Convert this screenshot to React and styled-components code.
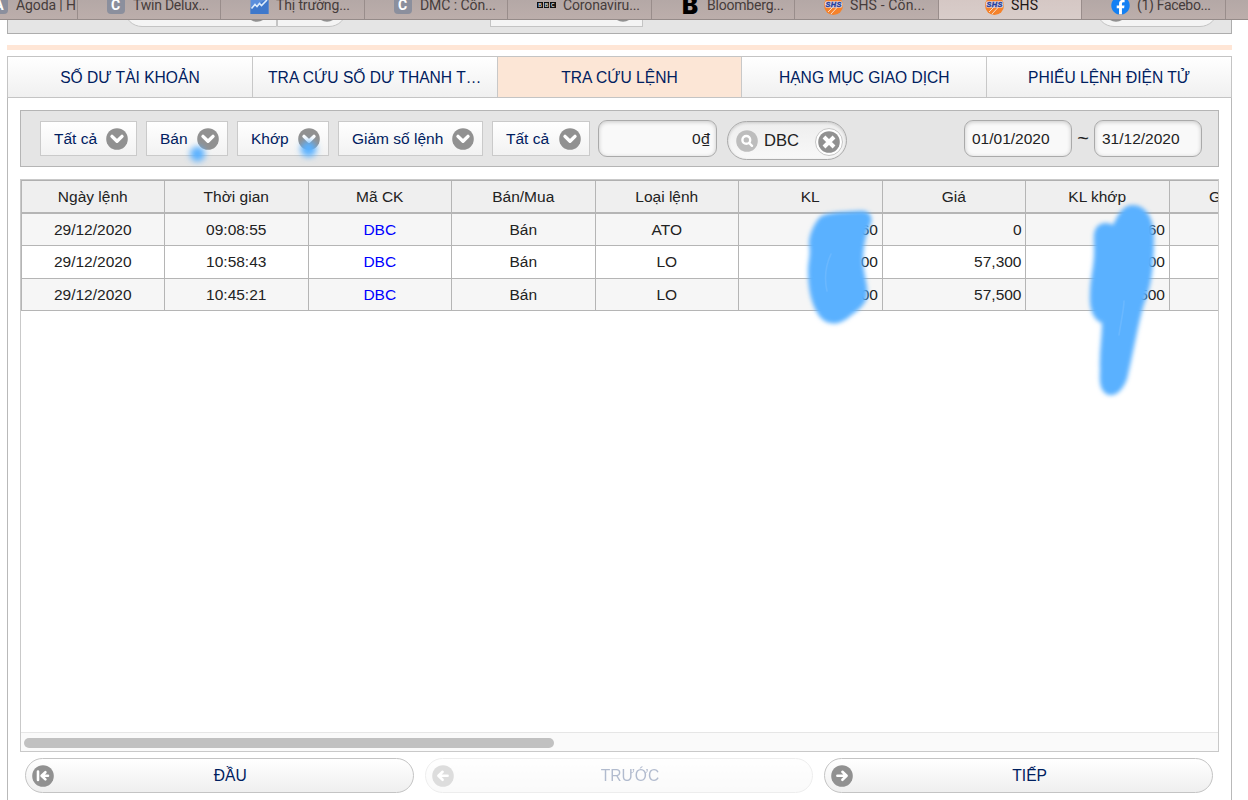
import React from "react";
import styled, { createGlobalStyle, css } from "styled-components";
import { FaFacebook } from "react-icons/fa";

const browserTabs = [
  { title: "Agoda | H", icon: "A", start: 56 },
  { title: "Twin Delux...", icon: "C", width: 76 },
  { title: "Thị trường...", icon: "chart", width: 74 },
  { title: "DMC : Côn...", icon: "C", width: 76 },
  { title: "Coronaviru...", icon: "bbc", width: 77 },
  { title: "Bloomberg...", icon: "B", width: 77 },
  { title: "SHS - Côn...", icon: "shs", width: 75 },
  { title: "SHS", icon: "shs", width: 27, start: 46, active: true },
  { title: "(1) Facebo...", icon: "facebook", width: 74 },
];

const sections = [
  { label: "SỐ DƯ TÀI KHOẢN" },
  { label: "TRA CỨU SỐ DƯ THANH T…" },
  { label: "TRA CỨU LỆNH", active: true },
  { label: "HẠNG MỤC GIAO DỊCH" },
  { label: "PHIẾU LỆNH ĐIỆN TỬ" },
];

const filters = [
  { label: "Tất cả", width: 97 },
  { label: "Bán", width: 82 },
  { label: "Khớp", width: 92 },
  { label: "Giảm số lệnh", width: 145 },
  { label: "Tất cả", width: 98 },
];

const columns = [
  "Ngày lệnh",
  "Thời gian",
  "Mã CK",
  "Bán/Mua",
  "Loại lệnh",
  "KL",
  "Giá",
  "KL khớp",
  "Giá khớp",
];

const orders = [
  ["29/12/2020", "09:08:55", "DBC", "Bán", "ATO", "60", "0", "60", ""],
  ["29/12/2020", "10:58:43", "DBC", "Bán", "LO", "00", "57,300", "00", ""],
  ["29/12/2020", "10:45:21", "DBC", "Bán", "LO", "00", "57,500", "500", ""],
];

const iconPaths = {
  down: "M6 8.4 11 13.3 16 8.4",
  close: "M6 6 16 16M16 6 6 16",
  first: "M6 6.6V15M16 10.8H10.5M13.4 7.2 9.6 10.8 13.4 14.4",
  prev: "M15.6 10.8H7M10.6 6.8 6.4 10.8 10.6 14.8",
  next: "M6.4 10.8H15M11.4 6.8 15.6 10.8 11.4 14.8",
};

function DiscIcon({ name, color = "#919191", stroke = 2.6 }) {
  return (
    <Disc viewBox="0 0 22 22">
      <circle cx="11" cy="11" r="10.8" fill={color} />
      {name === "search" ? (
        <g fill="none" stroke="#fff" strokeWidth="2.4" strokeLinecap="round">
          <circle cx="10.3" cy="9.9" r="3.9" />
          <path d="M13.2 13 16 15.8" />
        </g>
      ) : (
        <path
          d={iconPaths[name]}
          fill="none"
          stroke="#fff"
          strokeWidth={stroke}
          strokeLinecap={name === "close" ? "butt" : "round"}
          strokeLinejoin="round"
        />
      )}
    </Disc>
  );
}

function Favicon({ name }) {
  if (name === "chart") {
    return (
      <svg width="19" height="18" viewBox="0 0 19 18">
        <rect x="0.5" width="18" height="18" fill="#5b8fdc" />
        <path d="M0.5 12 5 8 8 9 13 5 18.5 4V18H0.5Z" fill="#3f78cb" />
        <path
          d="M1.5 12.5 5 8.5 7 10.5 9.5 7.5 11.5 9.5 17 4"
          fill="none"
          stroke="#dcebfb"
          strokeWidth="1.6"
        />
      </svg>
    );
  }
  if (name === "bbc") {
    return (
      <BbcMark>
        <span>B</span>
        <span>B</span>
        <span>C</span>
      </BbcMark>
    );
  }
  if (name === "B") {
    return <HeavyMark>B</HeavyMark>;
  }
  if (name === "shs") {
    return (
      <svg width="19" height="19" viewBox="0 0 19 19">
        <circle cx="9.5" cy="9.5" r="9.5" fill="#f5822b" />
        <path
          d="M4 16 9 11M7 18 13 11.5"
          stroke="#f7dccb"
          strokeWidth="1"
        />
        <rect x="0.8" y="5.2" width="17.6" height="6.6" rx="2" fill="#e3d5dc" />
        <text
          x="9.5"
          y="11"
          textAnchor="middle"
          fontFamily="Liberation Sans, sans-serif"
          fontSize="7.4"
          fontWeight="700"
          fontStyle="italic"
          fill="#263f9e"
          stroke="#263f9e"
          strokeWidth="0.4"
          textLength="16"
        >
          SHS
        </text>
      </svg>
    );
  }
  if (name === "facebook") {
    return (
      <FacebookMark>
        <FaFacebook size={19} />
      </FacebookMark>
    );
  }
  return <LetterMark>{name}</LetterMark>;
}

function BrowserBar() {
  return (
    <TabStrip>
      {browserTabs.map((tab, i) => (
        <BrowserTab key={i} $active={tab.active} $start={tab.start}>
          <Favicon name={tab.icon} />
          <TabTitle viewBox={`0 0 ${tab.width || 66} 20`} $width={tab.width || 66}>
            <text x="0" y="14.7" textLength={tab.width || 60} lengthAdjust="spacing">
              {tab.title}
            </text>
          </TabTitle>
        </BrowserTab>
      ))}
    </TabStrip>
  );
}

// hand-drawn marks that cover the order volumes
function Redaction() {
  return (
    <Marks viewBox="0 0 1248 800">
      <defs>
        <filter id="soft" x="-20%" y="-20%" width="140%" height="140%">
          <feGaussianBlur stdDeviation="2" />
        </filter>
        <filter id="softer" x="-100%" y="-100%" width="300%" height="300%">
          <feGaussianBlur stdDeviation="3.2" />
        </filter>
      </defs>
      <g fill="#5ab1ff" filter="url(#softer)">
        <circle cx="197.5" cy="154" r="7.5" />
        <circle cx="308.5" cy="149" r="8" />
      </g>
      <g fill="#5ab1ff" filter="url(#soft)">
        <path d="M820 217C828 212 842 212 858 211C868 210 873 215 871 223C866 233 863 247 863 262C864 276 869 288 867 298C863 308 855 312 848 318C839 325 828 326 820 317C811 305 808 289 808 270C808 262 811 254 809 244C809 234 814 224 820 217Z" />
        <path d="M1096 228C1100 222 1108 222 1113 225C1117 218 1121 206 1132 205C1146 205 1154 218 1154 238C1154 262 1152 286 1144 304C1138 324 1134 350 1127 379C1122 392 1115 396 1109 395C1101 393 1099 384 1100 371C1099 353 1102 338 1102 323C1093 320 1089 308 1090 294C1090 278 1095 263 1094 247C1094 240 1093 233 1096 228Z" />
      </g>
      <g fill="none" stroke="#6ab8ff" strokeWidth="1.6" strokeLinecap="round">
        <path d="M831 254C825 267 824 278 827 291" />
        <path d="M1124 301C1124 309 1121 321 1119 335" />
      </g>
    </Marks>
  );
}

export default function App() {
  return (
    <>
      <GlobalStyle />
      <Screen>
        <BrowserBar />
        <Content>
          <PreviousBar>
            <PeekPill $width={153} $left>
              <DiscIcon name="down" />
            </PeekPill>
            <PeekPill $width={70} $right>
              <DiscIcon name="down" />
            </PeekPill>
            <PeekPill $width={153} $offset={143}>
              <DiscIcon name="down" />
            </PeekPill>
            <PeekPill $width={122} $offset={453} $left $right $lead>
              <DiscIcon name="down" />
            </PeekPill>
          </PreviousBar>
          <Divider />
          <SectionTabs>
            {sections.map((section) => (
              <SectionTab key={section.label} $active={section.active}>
                {section.label}
              </SectionTab>
            ))}
          </SectionTabs>
          <Panel>
            <FilterBar>
              {filters.map((filter, i) => (
                <Select key={i} $width={filter.width}>
                  {filter.label}
                  <DiscIcon name="down" stroke={3.4} />
                </Select>
              ))}
              <PriceField>
                0<Currency>₫</Currency>
              </PriceField>
              <SearchField>
                <DiscIcon name="search" color="#bdbdbd" />
                <span>DBC</span>
                <ClearButton>
                  <DiscIcon name="close" stroke={4} />
                </ClearButton>
              </SearchField>
              <Dates>
                <DateField>01/01/2020</DateField>
                <Tilde>~</Tilde>
                <DateField>31/12/2020</DateField>
              </Dates>
            </FilterBar>
            <TableBox>
              <HeaderRow>
                {columns.map((column) => (
                  <HeaderCell key={column}>{column}</HeaderCell>
                ))}
              </HeaderRow>
              {orders.map((order, i) => (
                <Row key={i} $striped={i % 2 === 0}>
                  {order.map((value, col) => (
                    <Cell key={col} $numeric={col > 4} $symbol={col === 2}>
                      {value}
                    </Cell>
                  ))}
                </Row>
              ))}
              <ScrollTrack>
                <ScrollThumb />
              </ScrollTrack>
            </TableBox>
            <Pager>
              <PagerButton>
                <DiscIcon name="first" />
                <span>ĐẦU</span>
              </PagerButton>
              <PagerButton $disabled>
                <DiscIcon name="prev" />
                <span>TRƯỚC</span>
              </PagerButton>
              <PagerButton>
                <DiscIcon name="next" />
                <span>TIẾP</span>
              </PagerButton>
            </Pager>
          </Panel>
        </Content>
        <Redaction />
      </Screen>
    </>
  );
}

const GlobalStyle = createGlobalStyle`
  * {
    box-sizing: border-box;
  }
  body {
    margin: 0;
    background: #fff;
  }
`;

const Screen = styled.div`
  position: relative;
  width: 1248px;
  height: 800px;
  overflow: hidden;
  background: #fff;
  color: #222;
  font-family: "Liberation Sans", Arial, sans-serif;
  font-size: 15.5px;
`;

const TabStrip = styled.div`
  display: flex;
  height: 20px;
  overflow: hidden;
  background: linear-gradient(#b4a8a6, #bcaeab);
  border-bottom: 1px solid #958b89;
  margin-left: -66px;
  width: 1314px;
`;

const BrowserTab = styled.div`
  display: flex;
  align-items: center;
  gap: 7px;
  flex: 0 0 143.5px;
  height: 30px;
  margin-top: -10px;
  padding-left: ${(props) => props.$start || 29}px;
  overflow: hidden;
  color: ${(props) => (props.$active ? "#1d1615" : "#463c3b")};
  background: ${(props) =>
    props.$active ? "linear-gradient(#d3c5c2, #d9cdca)" : "transparent"};
  border-right: 1px solid #998d8b;

  > * {
    flex-shrink: 0;
  }
`;

const TabTitle = styled.svg`
  width: ${(props) => props.$width}px;
  height: 20px;
  fill: currentColor;
  overflow: visible;
  font-family: Roboto, sans-serif;
  font-size: 14px;
`;

const mark = css`
  display: flex;
  align-items: center;
  justify-content: center;
  width: 19px;
  height: 19px;
`;

const LetterMark = styled.div`
  ${mark};
  width: 18px;
  height: 18px;
  margin-right: 1px;
  border-radius: 4px;
  background: #8b8f9d;
  color: #fff;
  font-family: Roboto, sans-serif;
  font-size: 14px;
  font-weight: 700;
`;

const HeavyMark = styled.div`
  ${mark};
  color: #000;
  font-family: Inter, sans-serif;
  font-size: 24px;
  font-weight: 900;
`;

const FacebookMark = styled.div`
  ${mark};
  border-radius: 50%;
  background: radial-gradient(#fff 60%, transparent 61%);
  color: #1480f3;
`;

const BbcMark = styled.div`
  ${mark};
  gap: 1px;

  span {
    width: 5.4px;
    height: 6px;
    background: #111;
    color: #ddd;
    font-size: 5px;
    line-height: 6px;
    font-weight: 700;
    text-align: center;
  }
`;

const Disc = styled.svg`
  display: block;
  flex: none;
  width: 22px;
  height: 22px;
`;

const Content = styled.div`
  display: flex;
  flex-direction: column;
  width: 1225px;
  height: 780px;
  margin-left: 7px;

  > * {
    flex-shrink: 0;
  }
`;

const PreviousBar = styled.div`
  display: flex;
  align-items: flex-start;
  height: 14px;
  padding-left: 116px;
  overflow: hidden;
  background: #e5e5e5;
  border: 1px solid #adadad;
  border-top: 0;
`;

const PeekPill = styled.div`
  display: flex;
  align-items: center;
  justify-content: ${(props) => (props.$lead ? "flex-start" : "flex-end")};
  flex: none;
  width: ${(props) => props.$width}px;
  height: 36px;
  margin-top: -29px;
  margin-left: ${(props) => props.$offset || 0}px;
  padding: 4px 8px 0;
  background: #f4f4f4;
  border: 1px solid #c4c4c4;
  border-radius: ${({ $left, $right }) =>
    `${$left ? 18 : 0}px ${$right ? 18 : 0}px ${$right ? 18 : 0}px ${$left ? 18 : 0}px`};
`;

const Divider = styled.div`
  height: 5px;
  margin: 11px 0 6px;
  background: #ffe6d6;
`;

const SectionTabs = styled.div`
  display: flex;
  height: 42px;
  border: 1px solid #c4c4c4;
`;

const SectionTab = styled.div`
  flex: 1;
  line-height: 41px;
  text-align: center;
  font-size: 15.6px;
  color: #00205f;
  white-space: nowrap;
  background: ${(props) =>
    props.$active ? "#fce6d6" : "linear-gradient(#fff, #f0f0f0)"};

  & + & {
    border-left: 1px solid #c8c8c8;
  }
`;

const Panel = styled.div`
  flex: 1;
  padding: 12px;
  border: 1px solid #b9b9b9;
  border-top: 0;
  border-bottom: 0;
`;

const FilterBar = styled.div`
  display: flex;
  align-items: center;
  gap: 9px;
  height: 57px;
  padding: 0 16px 0 19px;
  background: #e5e5e5;
  border: 1px solid #b5b5b5;
`;

const Select = styled.div`
  display: flex;
  align-items: center;
  justify-content: space-between;
  width: ${(props) => props.$width}px;
  height: 35px;
  padding: 1px 8px 0 13px;
  color: #00205f;
  background: linear-gradient(#fff, #f2f2f2);
  border: 1px solid #cacaca;
  font-size: 15.5px;
`;

const Field = styled.div`
  height: 37px;
  padding: 0 6px;
  line-height: 35px;
  background: #f9f9f9;
  border: 1px solid #aaa;
  border-radius: 9px;
  box-shadow: inset 0 1px 4px rgba(0, 0, 0, 0.2);
`;

const PriceField = styled(Field)`
  width: 119px;
  margin-left: -1px;
  text-align: right;
`;

const Currency = styled.span`
  font-family: "Noto Sans", sans-serif;
  font-size: 15px;
  line-height: 1;
`;

const SearchField = styled.div`
  display: flex;
  align-items: center;
  width: 120px;
  height: 39px;
  margin: 4px 0 0 1px;
  padding: 0 3px 0 8px;
  background: linear-gradient(#eee, #f8f8f8);
  border: 1px solid #aaa;
  border-radius: 20px;
  box-shadow: inset 0 1px 3px rgba(0, 0, 0, 0.16);
  font-size: 16.6px;

  span {
    flex: 1;
    padding-left: 6px;
  }
`;

const ClearButton = styled.div`
  display: flex;
  align-items: center;
  justify-content: center;
  width: 28px;
  height: 28px;
  margin-top: 2px;
  background: #fff;
  border: 1px solid #c6c6c6;
  border-radius: 50%;
`;

const Dates = styled.div`
  display: flex;
  align-items: center;
  margin-left: auto;
`;

const DateField = styled(Field)`
  width: 108px;
  padding-left: 7px;
`;

const Tilde = styled.div`
  width: 22px;
  text-align: center;
  font-size: 20px;
`;

const TableBox = styled.div`
  display: flex;
  flex-direction: column;
  height: 573px;
  margin-top: 12px;
  overflow: hidden;
  border: 1px solid #c9c9c9;
`;

const grid = css`
  display: grid;
  grid-template-columns: repeat(9, 143.5px);
  flex: none;
  margin-left: -0.5px;
  border-left: 1px solid #b5b5b5;
`;

const HeaderRow = styled.div`
  ${grid};
  height: 34px;
  background: #efefef;
  border-top: 1px solid #b0b0b0;
  border-bottom: 2px solid #b5b5b5;
`;

const Row = styled.div`
  ${grid};
  height: 32.3px;
  background: ${(props) => (props.$striped ? "#f6f6f6" : "#fff")};
  border-bottom: 1px solid #b5b5b5;
`;

const HeaderCell = styled.div`
  line-height: 31px;
  text-align: center;
  border-right: 1px solid #b5b5b5;
`;

const Cell = styled.div`
  padding: 0 3.5px;
  line-height: 32px;
  text-align: ${(props) => (props.$numeric ? "right" : "center")};
  color: ${(props) => (props.$symbol ? "#0000ff" : "inherit")};
  border-right: 1px solid #b5b5b5;
`;

const ScrollTrack = styled.div`
  height: 19px;
  margin-top: auto;
  padding: 5px 3px 3px;
  background: #fafafa;
  border-top: 1px solid #e6e6e6;
`;

const ScrollThumb = styled.div`
  width: 530px;
  height: 10px;
  border-radius: 5px;
  background: #c1c1c1;
`;

const Pager = styled.div`
  display: flex;
  gap: 11px;
  padding: 6px 6px 0 5px;
`;

const PagerButton = styled.div`
  display: flex;
  align-items: center;
  flex: 1;
  height: 35px;
  padding: 0 6px;
  color: #00205f;
  background: linear-gradient(#fff, #efefef);
  border: 1px solid #c4c4c4;
  border-radius: 18px;
  opacity: ${(props) => (props.$disabled ? 0.3 : 1)};
  font-size: 15.6px;

  span {
    flex: 1;
    text-align: center;
  }
`;

const Marks = styled.svg`
  position: absolute;
  inset: 0;
  width: 1248px;
  height: 800px;
  pointer-events: none;
`;
